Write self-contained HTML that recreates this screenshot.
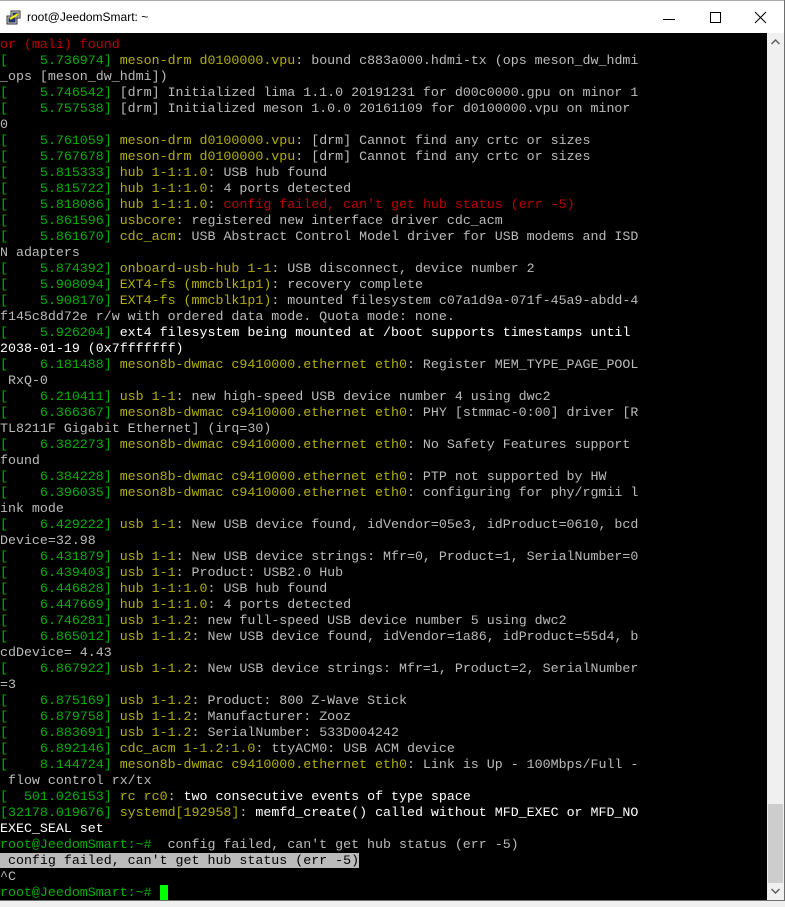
<!DOCTYPE html>
<html><head><meta charset="utf-8"><style>
html,body{margin:0;padding:0;width:785px;height:907px;overflow:hidden;background:#f0f0f0;}
#win{position:absolute;left:0;top:0;width:784px;height:900px;border-right:1px solid #6e6e6e;border-bottom:1px solid #6e6e6e;background:#fff;}
#title{position:absolute;left:0;top:0;width:784px;height:33px;background:#fff;border-top:1px solid #aaa;box-sizing:border-box;}
#title .t{position:absolute;left:27px;top:9px;font:12px "Liberation Sans",sans-serif;color:#000;}
#term{position:absolute;left:0;top:33px;width:767px;height:867px;background:#000;overflow:hidden;}
pre{margin:0;padding-top:4px;font-family:"Liberation Mono",monospace;font-size:13.3px;line-height:16px;color:#bbbbbb;white-space:pre;}
.g{color:#00b000}.y{color:#b0b000}.r{color:#bb0000}.w{color:#ffffff}
.hl{background:#bbbbbb;color:#000}
.cur{background:#00ff00;color:#00ff00}
#sb{position:absolute;left:767px;top:33px;width:17px;height:867px;background:#f0f0f0;}
#thumb{position:absolute;left:1px;top:771px;width:15px;height:79px;background:#cdcdcd;}
</style></head><body>
<div id="win">
<div id="title">
<svg style="position:absolute;left:6px;top:9px" width="16" height="16" viewBox="0 0 16 16"><rect x="1" y="6" width="10" height="8" fill="#ccc" stroke="#333"/><rect x="2.5" y="7.5" width="7" height="5" fill="#236"/><rect x="5" y="1" width="9" height="7" fill="#ddd" stroke="#333"/><rect x="6.5" y="2.5" width="6" height="4" fill="#236"/><path d="M4 9 L12 4" stroke="#ee0" stroke-width="2"/></svg>
<span class="t">root@JeedomSmart: ~</span>
<svg style="position:absolute;left:662px;top:10px" width="14" height="14"><path d="M1 8.5H13" stroke="#000"/></svg>
<svg style="position:absolute;left:709px;top:10px" width="14" height="14"><rect x="1.5" y="1.5" width="10" height="10" fill="none" stroke="#000"/></svg>
<svg style="position:absolute;left:754px;top:10px" width="14" height="14"><path d="M1 1L12 12M12 1L1 12" stroke="#000"/></svg>
</div>
<div id="term"><pre><span class="r">or (mali) found</span>
<span class="g">[    5.736974]</span> <span class="y">meson-drm d0100000.vpu</span>: bound c883a000.hdmi-tx (ops meson_dw_hdmi
_ops [meson_dw_hdmi])
<span class="g">[    5.746542]</span> [drm] Initialized lima 1.1.0 20191231 for d00c0000.gpu on minor 1
<span class="g">[    5.757538]</span> [drm] Initialized meson 1.0.0 20161109 for d0100000.vpu on minor
0
<span class="g">[    5.761059]</span> <span class="y">meson-drm d0100000.vpu</span>: [drm] Cannot find any crtc or sizes
<span class="g">[    5.767678]</span> <span class="y">meson-drm d0100000.vpu</span>: [drm] Cannot find any crtc or sizes
<span class="g">[    5.815333]</span> <span class="y">hub 1-1:1.0</span>: USB hub found
<span class="g">[    5.815722]</span> <span class="y">hub 1-1:1.0</span>: 4 ports detected
<span class="g">[    5.818086]</span> <span class="y">hub 1-1:1.0</span>: <span class="r">config failed, can't get hub status (err -5)</span>
<span class="g">[    5.861596]</span> <span class="y">usbcore</span>: registered new interface driver cdc_acm
<span class="g">[    5.861670]</span> <span class="y">cdc_acm</span>: USB Abstract Control Model driver for USB modems and ISD
N adapters
<span class="g">[    5.874392]</span> <span class="y">onboard-usb-hub 1-1</span>: USB disconnect, device number 2
<span class="g">[    5.908094]</span> <span class="y">EXT4-fs (mmcblk1p1)</span>: recovery complete
<span class="g">[    5.908170]</span> <span class="y">EXT4-fs (mmcblk1p1)</span>: mounted filesystem c07a1d9a-071f-45a9-abdd-4
f145c8dd72e r/w with ordered data mode. Quota mode: none.
<span class="g">[    5.926204]</span> <span class="w">ext4 filesystem being mounted at /boot supports timestamps until</span>
<span class="w">2038-01-19 (0x7fffffff)</span>
<span class="g">[    6.181488]</span> <span class="y">meson8b-dwmac c9410000.ethernet eth0</span>: Register MEM_TYPE_PAGE_POOL
 RxQ-0
<span class="g">[    6.210411]</span> <span class="y">usb 1-1</span>: new high-speed USB device number 4 using dwc2
<span class="g">[    6.366367]</span> <span class="y">meson8b-dwmac c9410000.ethernet eth0</span>: PHY [stmmac-0:00] driver [R
TL8211F Gigabit Ethernet] (irq=30)
<span class="g">[    6.382273]</span> <span class="y">meson8b-dwmac c9410000.ethernet eth0</span>: No Safety Features support
found
<span class="g">[    6.384228]</span> <span class="y">meson8b-dwmac c9410000.ethernet eth0</span>: PTP not supported by HW
<span class="g">[    6.396035]</span> <span class="y">meson8b-dwmac c9410000.ethernet eth0</span>: configuring for phy/rgmii l
ink mode
<span class="g">[    6.429222]</span> <span class="y">usb 1-1</span>: New USB device found, idVendor=05e3, idProduct=0610, bcd
Device=32.98
<span class="g">[    6.431879]</span> <span class="y">usb 1-1</span>: New USB device strings: Mfr=0, Product=1, SerialNumber=0
<span class="g">[    6.439403]</span> <span class="y">usb 1-1</span>: Product: USB2.0 Hub
<span class="g">[    6.446828]</span> <span class="y">hub 1-1:1.0</span>: USB hub found
<span class="g">[    6.447669]</span> <span class="y">hub 1-1:1.0</span>: 4 ports detected
<span class="g">[    6.746281]</span> <span class="y">usb 1-1.2</span>: new full-speed USB device number 5 using dwc2
<span class="g">[    6.865012]</span> <span class="y">usb 1-1.2</span>: New USB device found, idVendor=1a86, idProduct=55d4, b
cdDevice= 4.43
<span class="g">[    6.867922]</span> <span class="y">usb 1-1.2</span>: New USB device strings: Mfr=1, Product=2, SerialNumber
=3
<span class="g">[    6.875169]</span> <span class="y">usb 1-1.2</span>: Product: 800 Z-Wave Stick
<span class="g">[    6.879758]</span> <span class="y">usb 1-1.2</span>: Manufacturer: Zooz
<span class="g">[    6.883691]</span> <span class="y">usb 1-1.2</span>: SerialNumber: 533D004242
<span class="g">[    6.892146]</span> <span class="y">cdc_acm 1-1.2:1.0</span>: ttyACM0: USB ACM device
<span class="g">[    8.144724]</span> <span class="y">meson8b-dwmac c9410000.ethernet eth0</span>: Link is Up - 100Mbps/Full -
 flow control rx/tx
<span class="g">[  501.026153]</span> <span class="y">rc rc0</span>: <span class="w">two consecutive events of type space</span>
<span class="g">[32178.019676]</span> <span class="y">systemd[192958]</span>: <span class="w">memfd_create() called without MFD_EXEC or MFD_NO</span>
<span class="w">EXEC_SEAL set</span>
<span class="g">root@JeedomSmart:~#</span>  config failed, can't get hub status (err -5)
<span class="hl"> config failed, can't get hub status (err -5)</span>
^C
<span class="g">root@JeedomSmart:~#</span> <span class="cur"> </span></pre></div>
<div id="sb">
<svg style="position:absolute;left:4px;top:6px" width="9" height="6"><path d="M0.5 5L4.5 1L8.5 5" stroke="#606060" stroke-width="1.5" fill="none"/></svg>
<div id="thumb"></div>
<svg style="position:absolute;left:4px;top:855px" width="9" height="6"><path d="M0.5 1L4.5 5L8.5 1" stroke="#606060" stroke-width="1.5" fill="none"/></svg>
</div>
</div>
</body></html>
